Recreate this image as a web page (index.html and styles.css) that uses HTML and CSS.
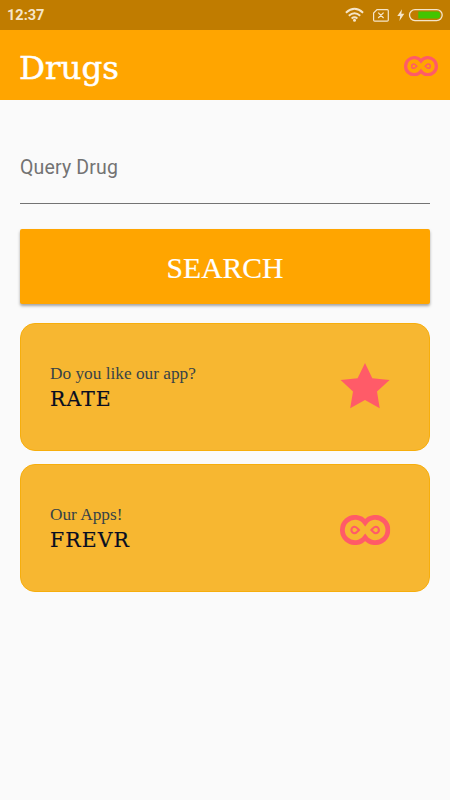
FILE: index.html
```html
<!DOCTYPE html>
<html lang="en">
<head>
<meta charset="utf-8">
<title>Drugs</title>
<link rel="stylesheet" href="styles.css">
</head>
<body>
<svg class="defs" aria-hidden="true">
  <symbol id="mask" viewBox="0 0 50.3 30">
    <path d="M25.15 7.54A12.6 12.6 0 1 0 25.15 22.46A12.6 12.6 0 1 0 25.15 7.54Z" fill="none" stroke="#ff5b68" stroke-width="4.8"/>
    <path d="M18.9 15C17.5 13.5 16.3 11.8 14.6 11.8A3.2 3.2 0 0 0 14.6 18.2C16.3 18.2 17.5 16.5 18.9 15Z" fill="none" stroke="#ff5b68" stroke-width="2.1"/>
    <path d="M31.4 15C32.8 13.5 34 11.8 35.7 11.8A3.2 3.2 0 0 1 35.7 18.2C34 18.2 32.8 16.5 31.4 15Z" fill="none" stroke="#ff5b68" stroke-width="2.1"/>
  </symbol>
</svg>
<div class="status">
  <span class="time">12:37</span>
  <svg class="indicators" width="105" height="30" viewBox="0 0 105 30" fill="none" stroke="#f5e5c9">
    <path d="M.9 12.7Q9.5 4.9 18.1 12.7M3.8 15.7Q9.5 10.7 15.2 15.7M6.6 18.4Q9.5 16.2 12.4 18.4" stroke-width="1.9"/>
    <circle cx="9.5" cy="20.2" r="1.5" fill="#f5e5c9" stroke="none"/>
    <path d="M32 9.6H42.2Q43.3 9.6 43.3 10.7V20.1Q43.3 21.2 42.2 21.2H29.7Q28.6 21.2 28.6 20.1V13ZM33.2 12.6L38.6 18M38.6 12.6L33.2 18" stroke-width="1.2"/>
    <path d="M57 9.2L52.3 16H55.2L54.4 20.9L59.3 13.8H56.3Z" fill="#f5e5c9" stroke="none"/>
    <rect x="64.5" y="9.6" width="32.7" height="11" rx="5.5" stroke-width="1.3"/>
    <path d="M73.3 11.5H92.5Q95.2 11.5 95.2 15T92.5 18.6H73.3Z" fill="#43c500" stroke="none"/>
  </svg>
</div>
<header class="toolbar">
  <h1 class="title">Drugs</h1>
  <svg class="toolbar-icon"><use href="#mask"/></svg>
</header>
<main class="content">
  <div class="field">Query Drug</div>
  <button class="search"><span class="search-label">SEARCH</span></button>
  <section class="card">
    <div class="card-text">
      <p class="caption">Do you like our app?</p>
      <h2 class="heading">RATE</h2>
    </div>
    <svg class="card-icon star" viewBox="0 0 50 46"><path d="M25 0L32.3 15.2L49.6 17L37 28.5L39.7 45.3L25 37L10.2 45.3L13 28.5L.6 17L17.6 15.2Z" fill="#ff5b68"/></svg>
  </section>
  <section class="card">
    <div class="card-text">
      <p class="caption">Our Apps!</p>
      <h2 class="heading">FREVR</h2>
    </div>
    <svg class="card-icon"><use href="#mask"/></svg>
  </section>
</main>
</body>
</html>
```
FILE: styles.css
```css
* { box-sizing: border-box; }
body {
  margin: 0;
  height: 800px;
  background: #fafafa;
  font-family: "Liberation Serif", serif;
}
.defs { display: none; }
.status {
  display: flex;
  justify-content: space-between;
  height: 30px;
  padding-left: 7px;
  background: #c07c00;
}
.time {
  font: 700 14.5px/31px Roboto, sans-serif;
  color: #f5e5c9;
}
.toolbar {
  display: flex;
  align-items: center;
  justify-content: space-between;
  height: 70px;
  padding: 0 12px 0 19px;
  background: #ffa500;
}
.title {
  margin: 0;
  padding-top: 5px;
  font-family: "DejaVu Serif", serif;
  font-size: 32.5px;
  line-height: 40px;
  font-weight: 400;
  color: #fff;
  -webkit-text-stroke: 0.5px #fff;
}
.toolbar-icon { width: 34px; height: 20.3px; margin-top: 3px; }
.content { padding: 0 20px; }
.field {
  height: 104px;
  padding-top: 56px;
  border-bottom: 1px solid #737373;
  font: 400 19.5px/24px Roboto, sans-serif;
  letter-spacing: 0.16px;
  color: #737373;
}
.search {
  display: flex;
  align-items: center;
  justify-content: center;
  width: 100%;
  height: 74.5px;
  margin: 25px 0 19px;
  padding: 4px 0 0;
  border: 0;
  border-radius: 2px;
  background: #ffa500;
  box-shadow: 0 2px 3px rgba(0, 0, 0, 0.35);
  font-family: inherit;
  font-size: 29.6px;
  color: #fff;
}
.search-label { -webkit-text-stroke: 0.2px #fff; }
.card {
  display: flex;
  align-items: center;
  justify-content: space-between;
  height: 128.5px;
  margin-bottom: 12.5px;
  padding: 0 39.5px 0 30px;
  border: 1px solid #f7ae0c;
  border-radius: 15px;
  background: #f7b731;
}
.card-text { margin: 1px 0 0 -1px; }
.caption {
  margin: 0;
  font-size: 17.3px;
  line-height: 24px;
  color: #384347;
}
.heading {
  margin: 0;
  font-family: "DejaVu Serif", serif;
  font-size: 20.4px;
  line-height: 27px;
  font-weight: 400;
  letter-spacing: 1.1px;
  color: #080d22;
  -webkit-text-stroke: 0.2px #080d22;
}
.card-icon { width: 50.3px; height: 30px; margin: 4px -1px 0 0; }
.star { width: 50px; height: 46px; margin: -1px 0 0; }
```
